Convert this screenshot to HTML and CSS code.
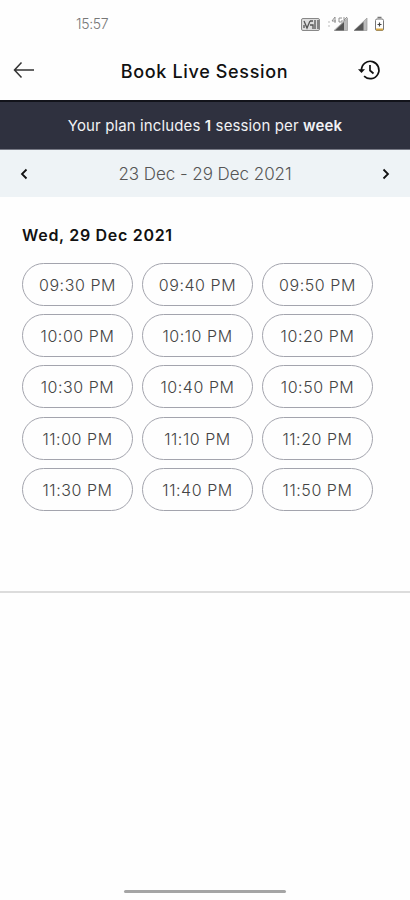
FILE: index.html
```
<!DOCTYPE html>
<html lang="en">
<head>
  <meta charset="UTF-8" />
  <meta name="viewport" content="width=device-width, initial-scale=1.0" />
  <title>Book Live Session</title>
  <link rel="stylesheet" href="styles.css">
</head>
<body>
  <div class="status-bar">
    <span class="clock">15:57</span>
    <svg class="status-icons" width="86" height="18" viewBox="0 0 86 18">
      <rect x="1.5" y="3.5" width="18" height="12" rx="1.5" fill="#ddd" stroke="#888" />
      <path d="M4 6l3 7 3-7M10 6h3M10 10h3v4M4 13v-3M15 5v9M18 5v9" fill="none" stroke="#555" stroke-width="1.3" />
      <path d="M28 7h2M28 11h2" stroke="#bbb" />
      <path d="M35 2l-3 4h4M35 2v6M42 3h-3v4h3V5M44 2v5M47 2l-3 3 3 2" fill="none" stroke="#888" stroke-width=".9" />
      <path d="M47.500 3v12.500H34z" fill="#bbb" stroke="#999" stroke-width=".7" />
      <path d="M44 7v8.500h-9z" fill="#555" />
      <path d="M67 3v12.500H54z" fill="#bbb" stroke="#999" stroke-width=".7" />
      <path d="M63.500 7v8.500H54z" fill="#555" />
      <rect x="75.500" y="4" width="8" height="11.500" rx="1.500" fill="#fff" stroke="#777" />
      <path d="M77.500 2.500h4" stroke="#777" stroke-width="1.500" />
      <path d="M79.500 7.500v4M77.500 9.500h4" stroke="#444" stroke-width="1.200" />
      <path d="M76 14.500h7" stroke="#d9a843" stroke-width="2" />
    </svg>
  </div>

  <header class="app-bar">
    <svg class="back" width="22" height="18" viewBox="0 0 22 18">
      <path d="M21 9H1.500M8.500 1.500L1.500 9l7 7.500" />
    </svg>
    <h1>Book Live Session</h1>
    <svg class="history" width="24" height="22" viewBox="0 0 24 22">
      <path d="M4.500 11a8.700 8.700 0 1 1 2.600 6.200" />
      <path d="M13 6v5.500l3.500 3" />
      <path class="tip" d="M1 10.300h7L4.500 14z" />
    </svg>
  </header>

  <div class="plan-banner"><p>Your plan includes <b>1</b> session per <b>week</b></p></div>

  <div class="week-nav">
    <svg width="8" height="12" viewBox="0 0 8 12"><path d="M6.500 1.500L2 6l4.500 4.500" /></svg>
    <span>23 Dec - 29 Dec 2021</span>
    <svg width="8" height="12" viewBox="0 0 8 12"><path d="M1.500 1.500L6 6l-4.500 4.500" /></svg>
  </div>

  <main class="sessions">
    <h2>Wed, 29 Dec 2021</h2>
    <div class="slots">
      <button class="slot">09:30 PM</button>
      <button class="slot">09:40 PM</button>
      <button class="slot">09:50 PM</button>
      <button class="slot">10:00 PM</button>
      <button class="slot">10:10 PM</button>
      <button class="slot">10:20 PM</button>
      <button class="slot">10:30 PM</button>
      <button class="slot">10:40 PM</button>
      <button class="slot">10:50 PM</button>
      <button class="slot">11:00 PM</button>
      <button class="slot">11:10 PM</button>
      <button class="slot">11:20 PM</button>
      <button class="slot">11:30 PM</button>
      <button class="slot">11:40 PM</button>
      <button class="slot">11:50 PM</button>
    </div>
  </main>

  <div class="home-bar"></div>
</body>
</html>
```
FILE: styles.css
```
* { margin: 0; padding: 0; box-sizing: border-box; }
body {
  height: 900px;
  display: flex;
  flex-direction: column;
  font-family: Inter, "Open Sans", sans-serif;
  background: #fefefe;
  color: #111;
  overflow: hidden;
}
svg {
  flex: none;
}
.status-bar {
  height: 46px;
  padding: 1px 24px 0 76px;
  display: flex;
  align-items: center;
  justify-content: space-between;
}
.clock {
  font-size: 14px;
  font-weight: 300;
  letter-spacing: -0.3px;
  color: #777;
}
.app-bar {
  height: 54px;
  padding: 0 29px 6px 13px;
  display: flex;
  align-items: center;
  justify-content: space-between;
}
.app-bar h1 {
  font-size: 18px;
  font-weight: 500;
  letter-spacing: 0.65px;
  padding: 3px 0 0 17px;
}
.back path {
  fill: none;
  stroke: #333;
  stroke-width: 1.5;
}
.history path {
  fill: none;
  stroke: #111;
  stroke-width: 1.7;
}
.history .tip {
  fill: #111;
  stroke: none;
}
.plan-banner {
  height: 50px;
  border-top: 2px solid #12131a;
  border-bottom: 1px solid #777985;
  background: #2f313f;
  color: #f1f1f4;
  display: flex;
  align-items: center;
  justify-content: center;
  font-size: 15px;
  letter-spacing: 0.12px;
}
.plan-banner b {
  font-weight: 600;
}
.week-nav {
  height: 47px;
  padding: 0 20px;
  background: #eef3f6;
  display: flex;
  align-items: center;
  justify-content: space-between;
  font-size: 17px;
  font-weight: 300;
  color: #555;
}
.week-nav span {
  letter-spacing: -0.05px;
}
.week-nav path {
  fill: none;
  stroke: #111;
  stroke-width: 1.8;
}
.sessions {
  height: 396px;
  padding: 27px 37px 0 22px;
  border-bottom: 2px solid #dcdcdc;
}
.sessions h2 {
  font-size: 16px;
  line-height: 22px;
  font-weight: 600;
  letter-spacing: 0.7px;
  margin-bottom: 17px;
}
.slots {
  display: grid;
  grid-template-columns: repeat(3, 111px);
  gap: 8.2px 9px;
}
.slot {
  height: 43px;
  border: 1px solid #a3a4ad;
  border-radius: 22px;
  background: #fefefe;
  font-family: inherit;
  font-size: 16px;
  font-weight: 300;
  letter-spacing: 0.55px;
  color: #444;
  padding-top: 1px;
}
.home-bar {
  width: 162px;
  height: 3px;
  margin: auto auto 7px;
  border-radius: 2px;
  background: #a5a5a5;
}
```
